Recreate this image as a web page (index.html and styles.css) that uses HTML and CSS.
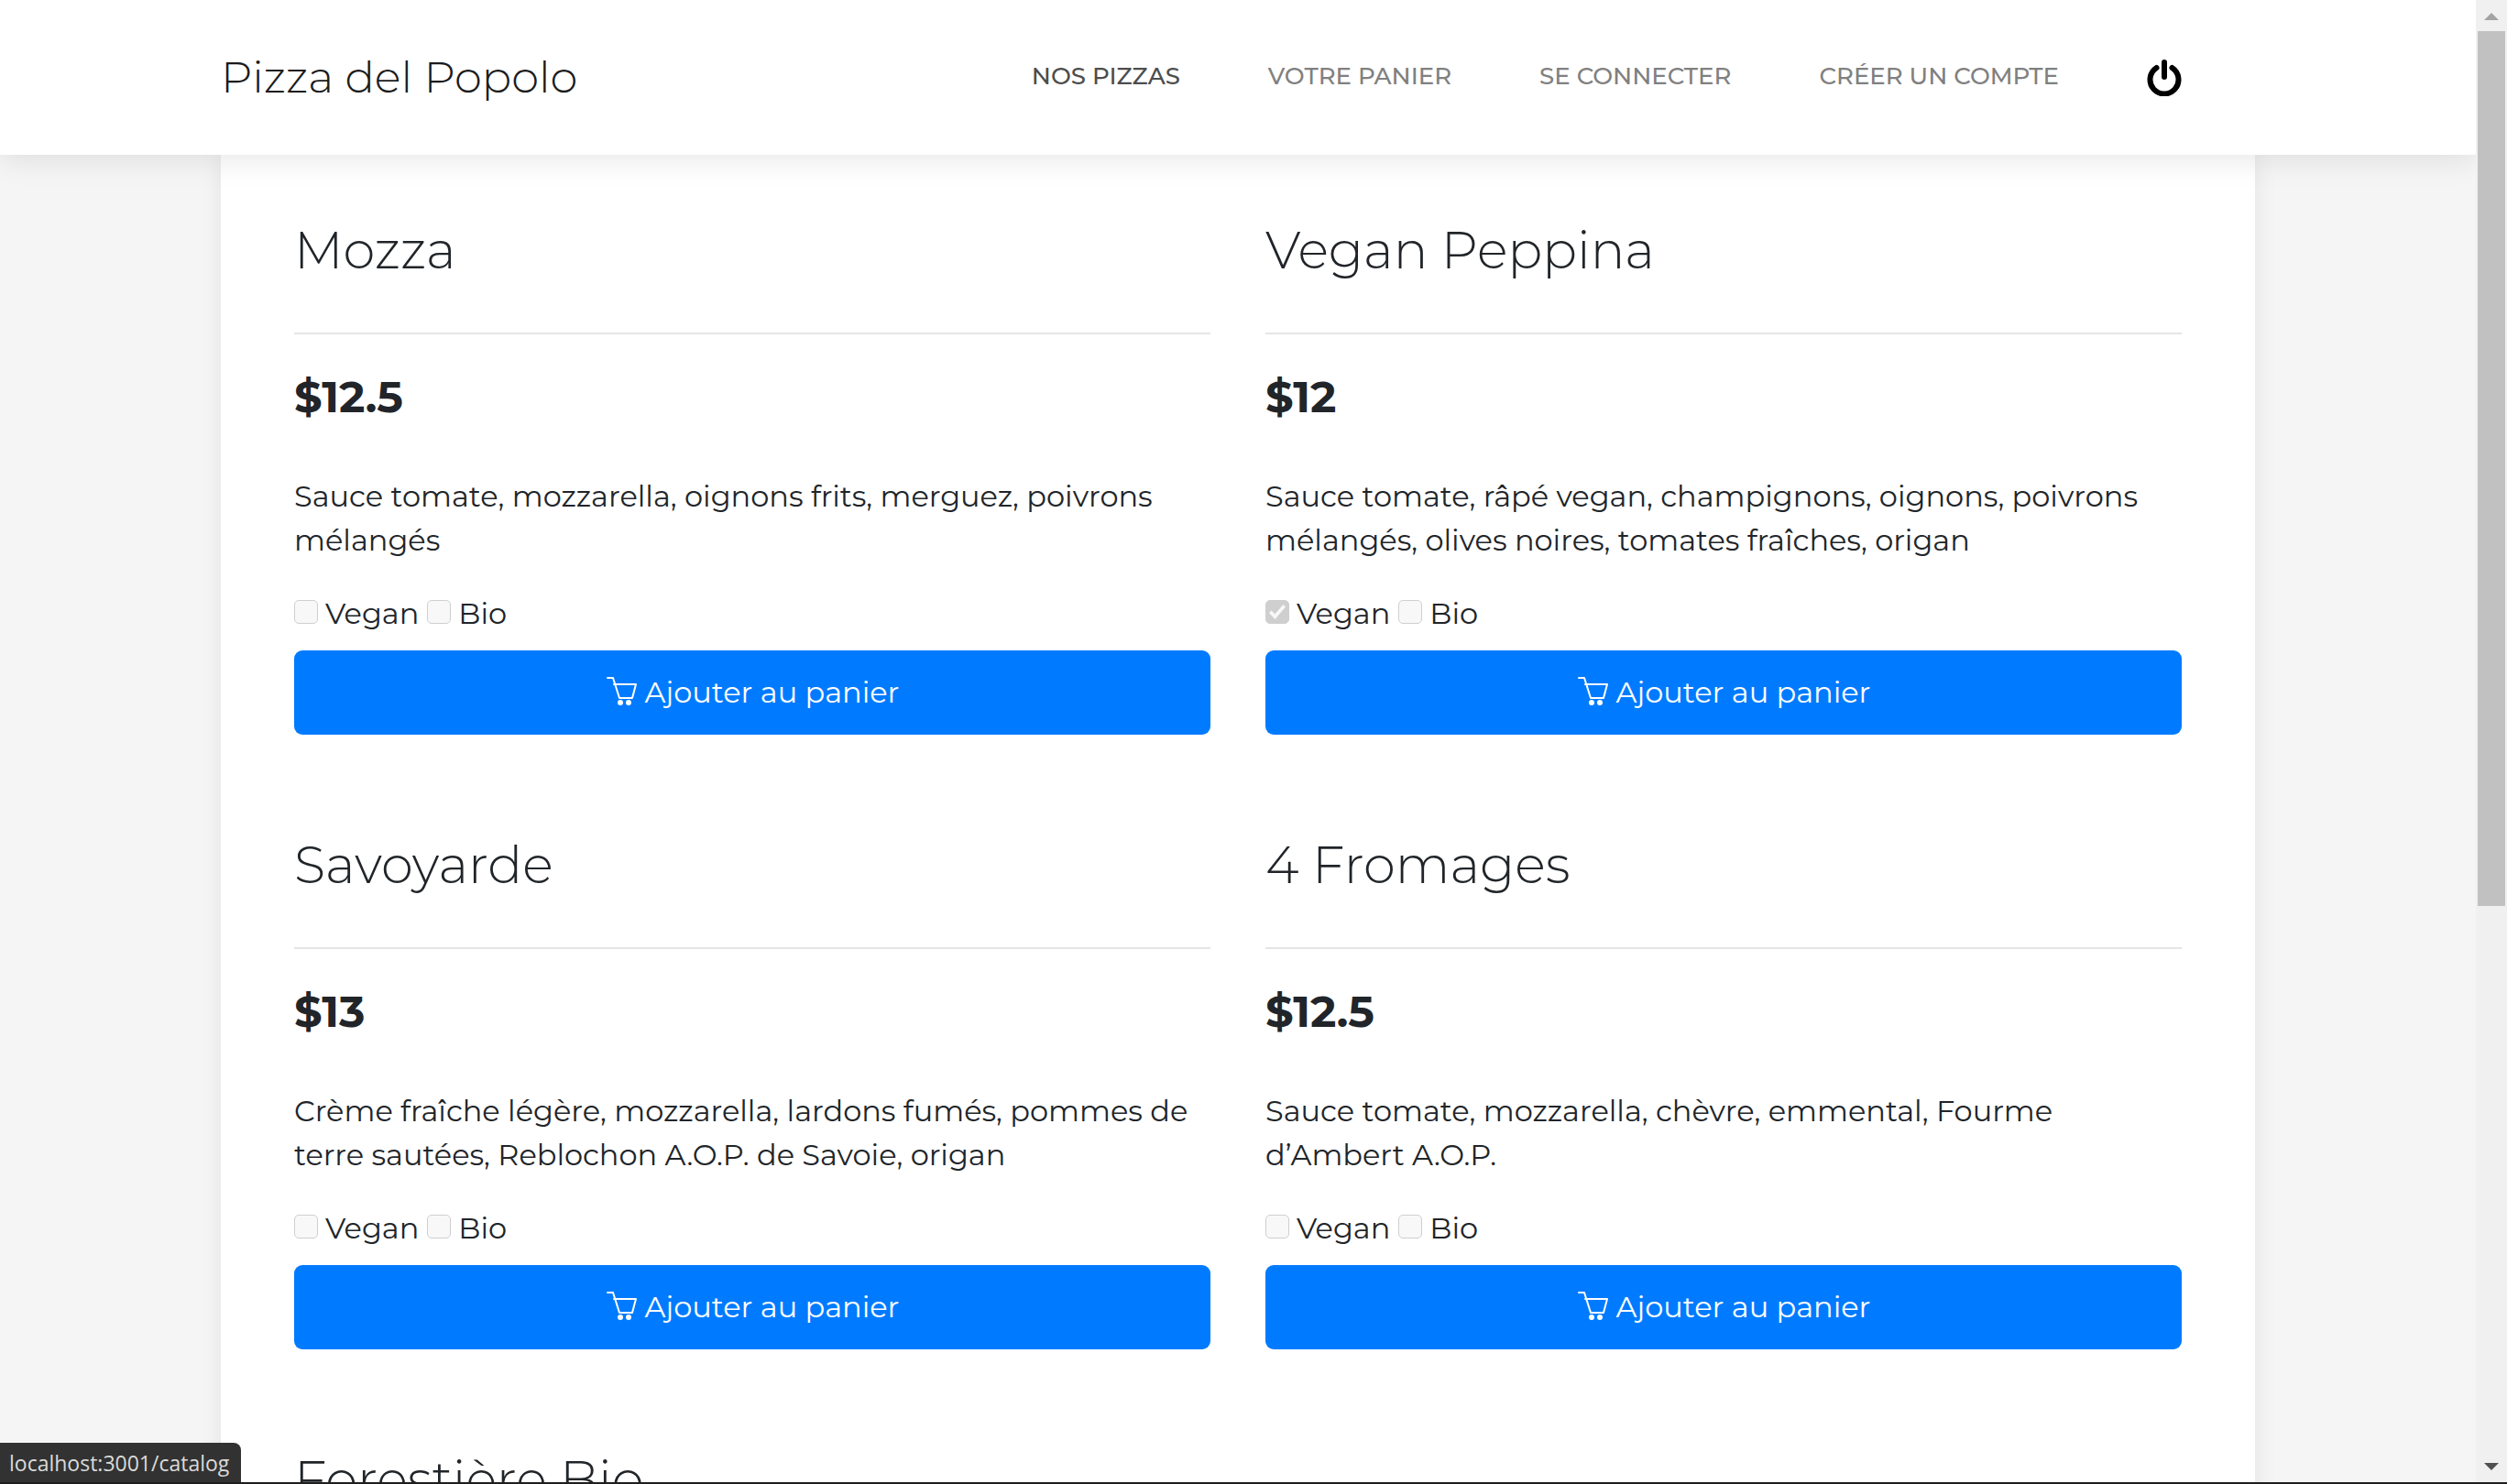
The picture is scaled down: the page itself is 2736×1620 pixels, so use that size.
FILE: index.html
```html
<!DOCTYPE html>
<html lang="fr">
<head>
<meta charset="utf-8">
<title>Pizza del Popolo</title>
<link rel="stylesheet" href="styles.css">
</head>
<body>
<svg class="symbols" aria-hidden="true">
  <symbol id="cart" viewBox="0 0 34 34">
    <path d="M2 2h6l7 22h14M9 9h24l-4 15" fill="none" stroke="currentColor" stroke-width="2" stroke-linecap="round" stroke-linejoin="round"/>
    <circle cx="16" cy="29" r="3" fill="currentColor"/>
    <circle cx="25" cy="29" r="3" fill="currentColor"/>
  </symbol>
</svg>
<div class="window">
  <div class="page">
    <header class="header">
      <div class="header-inner">
        <a class="brand" href="#">Pizza del Popolo</a>
        <nav class="nav">
          <a class="nav-link active" href="#">NOS PIZZAS</a>
          <a class="nav-link" href="#">VOTRE PANIER</a>
          <a class="nav-link" href="#">SE CONNECTER</a>
          <a class="nav-link" href="#">CRÉER UN COMPTE</a>
          <button class="power" type="button" aria-label="Se déconnecter">
            <svg viewBox="0 0 38 40" width="38" height="40"><path d="M10.500 9a15.500 15.500 0 1 0 17 0M19 3v16" fill="none" stroke="#000" stroke-width="6" stroke-linecap="round"/></svg>
          </button>
        </nav>
      </div>
    </header>
    <main class="catalog">
      <article class="pizza">
        <h2 class="name">Mozza</h2>
        <p class="price">$12.5</p>
        <p class="description">Sauce tomate, mozzarella, oignons frits, merguez, poivrons mélangés</p>
        <div class="options">
          <label class="option"><input class="check" type="checkbox" disabled>Vegan</label>
          <label class="option"><input class="check" type="checkbox" disabled>Bio</label>
        </div>
        <button class="add" type="button"><svg class="cart"><use href="#cart"/></svg>Ajouter au panier</button>
      </article>
      <article class="pizza">
        <h2 class="name">Vegan Peppina</h2>
        <p class="price">$12</p>
        <p class="description">Sauce tomate, râpé vegan, champignons, oignons, poivrons mélangés, olives noires, tomates fraîches, origan</p>
        <div class="options">
          <label class="option"><input class="check" type="checkbox" checked disabled>Vegan</label>
          <label class="option"><input class="check" type="checkbox" disabled>Bio</label>
        </div>
        <button class="add" type="button"><svg class="cart"><use href="#cart"/></svg>Ajouter au panier</button>
      </article>
      <article class="pizza">
        <h2 class="name">Savoyarde</h2>
        <p class="price">$13</p>
        <p class="description">Crème fraîche légère, mozzarella, lardons fumés, pommes de terre sautées, Reblochon A.O.P. de Savoie, origan</p>
        <div class="options">
          <label class="option"><input class="check" type="checkbox" disabled>Vegan</label>
          <label class="option"><input class="check" type="checkbox" disabled>Bio</label>
        </div>
        <button class="add" type="button"><svg class="cart"><use href="#cart"/></svg>Ajouter au panier</button>
      </article>
      <article class="pizza">
        <h2 class="name">4 Fromages</h2>
        <p class="price">$12.5</p>
        <p class="description">Sauce tomate, mozzarella, chèvre, emmental, Fourme d’Ambert A.O.P.</p>
        <div class="options">
          <label class="option"><input class="check" type="checkbox" disabled>Vegan</label>
          <label class="option"><input class="check" type="checkbox" disabled>Bio</label>
        </div>
        <button class="add" type="button"><svg class="cart"><use href="#cart"/></svg>Ajouter au panier</button>
      </article>
      <article class="pizza">
        <h2 class="name">Forestière Bio</h2>
      </article>
    </main>
  </div>
  <div class="scrollbar" aria-hidden="true">
    <svg class="arrow up" viewBox="0 0 16 8"><path d="M0 8l8-8 8 8z"/></svg>
    <div class="track"><div class="thumb"></div></div>
    <svg class="arrow down" viewBox="0 0 16 8"><path d="M0 0l8 8 8-8z"/></svg>
  </div>
  <div class="status">localhost:3001/catalog</div>
</div>
</body>
</html>
```
FILE: styles.css
```css
* {
  box-sizing: border-box;
}

body {
  margin: 0;
  color: #212529;
  background: #f5f5f5;
  font: 400 32px/48px Montserrat, Inter, sans-serif;
}

h2, p {
  margin: 0;
}

.symbols {
  display: none;
}

.window {
  position: relative;
  display: flex;
  height: 100vh;
  overflow: hidden;
  border-bottom: 2px solid #1e1e1e;
}

.page {
  flex: 1;
  min-width: 0;
  height: 100%;
  overflow: hidden;
}

/* Header */

.header {
  position: relative;
  padding: 55px 16px 56px;
  background: #fff;
  box-shadow: 0 4px 32px rgba(0, 0, 0, 0.1);
}

.header-inner {
  display: flex;
  align-items: center;
  justify-content: space-between;
  max-width: 2220px;
  margin: 0 auto;
  padding-right: 80px;
}

.brand {
  color: #1b1b1b;
  font-size: 48px;
  font-weight: 300;
  line-height: 58px;
  text-decoration: none;
}

.nav {
  display: flex;
  align-items: center;
  gap: 96px;
}

.nav-link {
  padding-bottom: 2px;
  color: #808080;
  font-size: 26px;
  font-weight: 500;
  line-height: 34px;
  text-decoration: none;
}

.nav-link.active {
  color: #4d4d4d;
}

.power {
  display: flex;
  padding: 2px 0 0;
  border: 0;
  background: none;
}

/* Catalog */

.catalog {
  display: grid;
  grid-template-columns: 1fr 1fr;
  align-content: start;
  gap: 108px 60px;
  max-width: 2220px;
  min-height: 100%;
  margin: 0 auto;
  padding: 70px 80px;
  background: #fff;
  box-shadow: 0 0 24px rgba(0, 0, 0, 0.08);
}

.name {
  padding-bottom: 56px;
  border-bottom: 2px solid #e5e5e5;
  font-size: 56px;
  font-weight: 300;
  line-height: 68px;
}

.price {
  margin: 39px 0 56px;
  font-size: 48px;
  font-weight: 700;
  line-height: 58px;
}

.description {
  margin-bottom: 32px;
}

.options {
  display: flex;
  gap: 9px;
  margin-bottom: 16px;
}

.option {
  display: flex;
  align-items: center;
  gap: 8px;
}

.check {
  display: grid;
  place-items: center;
  width: 26px;
  height: 26px;
  margin: 0 0 4px;
  border: 1px solid #cfcfcf;
  border-radius: 5px;
  background: #f8f8f8;
  appearance: none;
}

.check:checked {
  background: #cfcfcf;
}

.check:checked::before {
  width: 18px;
  height: 18px;
  background: #f8f8f8;
  clip-path: polygon(0 56%, 15% 42%, 35% 64%, 85% 6%, 100% 20%, 36% 94%);
  content: "";
}

.add {
  display: flex;
  align-items: center;
  justify-content: center;
  gap: 9px;
  width: 100%;
  height: 92px;
  border: 0;
  border-radius: 9px;
  color: #fff;
  background: #007bff;
  font: inherit;
}

.cart {
  width: 34px;
  height: 34px;
  margin-bottom: 2px;
}

/* Browser chrome */

.scrollbar {
  display: flex;
  flex-direction: column;
  justify-content: space-between;
  align-items: center;
  width: 34px;
  padding: 14px 2px 13px;
  background: #f0f0f0;
}

.arrow {
  width: 16px;
  height: 8px;
  fill: #505050;
}

.arrow.up {
  fill: #a3a3a3;
}

.track {
  flex: 1;
  width: 30px;
  margin: 12px 0;
}

.thumb {
  height: 61.6%;
  background: #c1c1c1;
}

.status {
  position: absolute;
  bottom: 0;
  left: 0;
  padding: 6px 13px 5px 10px;
  border-top-right-radius: 8px;
  color: #dadada;
  background: #323232;
  font: 400 23px/32px "Open Sans", sans-serif;
}
```
